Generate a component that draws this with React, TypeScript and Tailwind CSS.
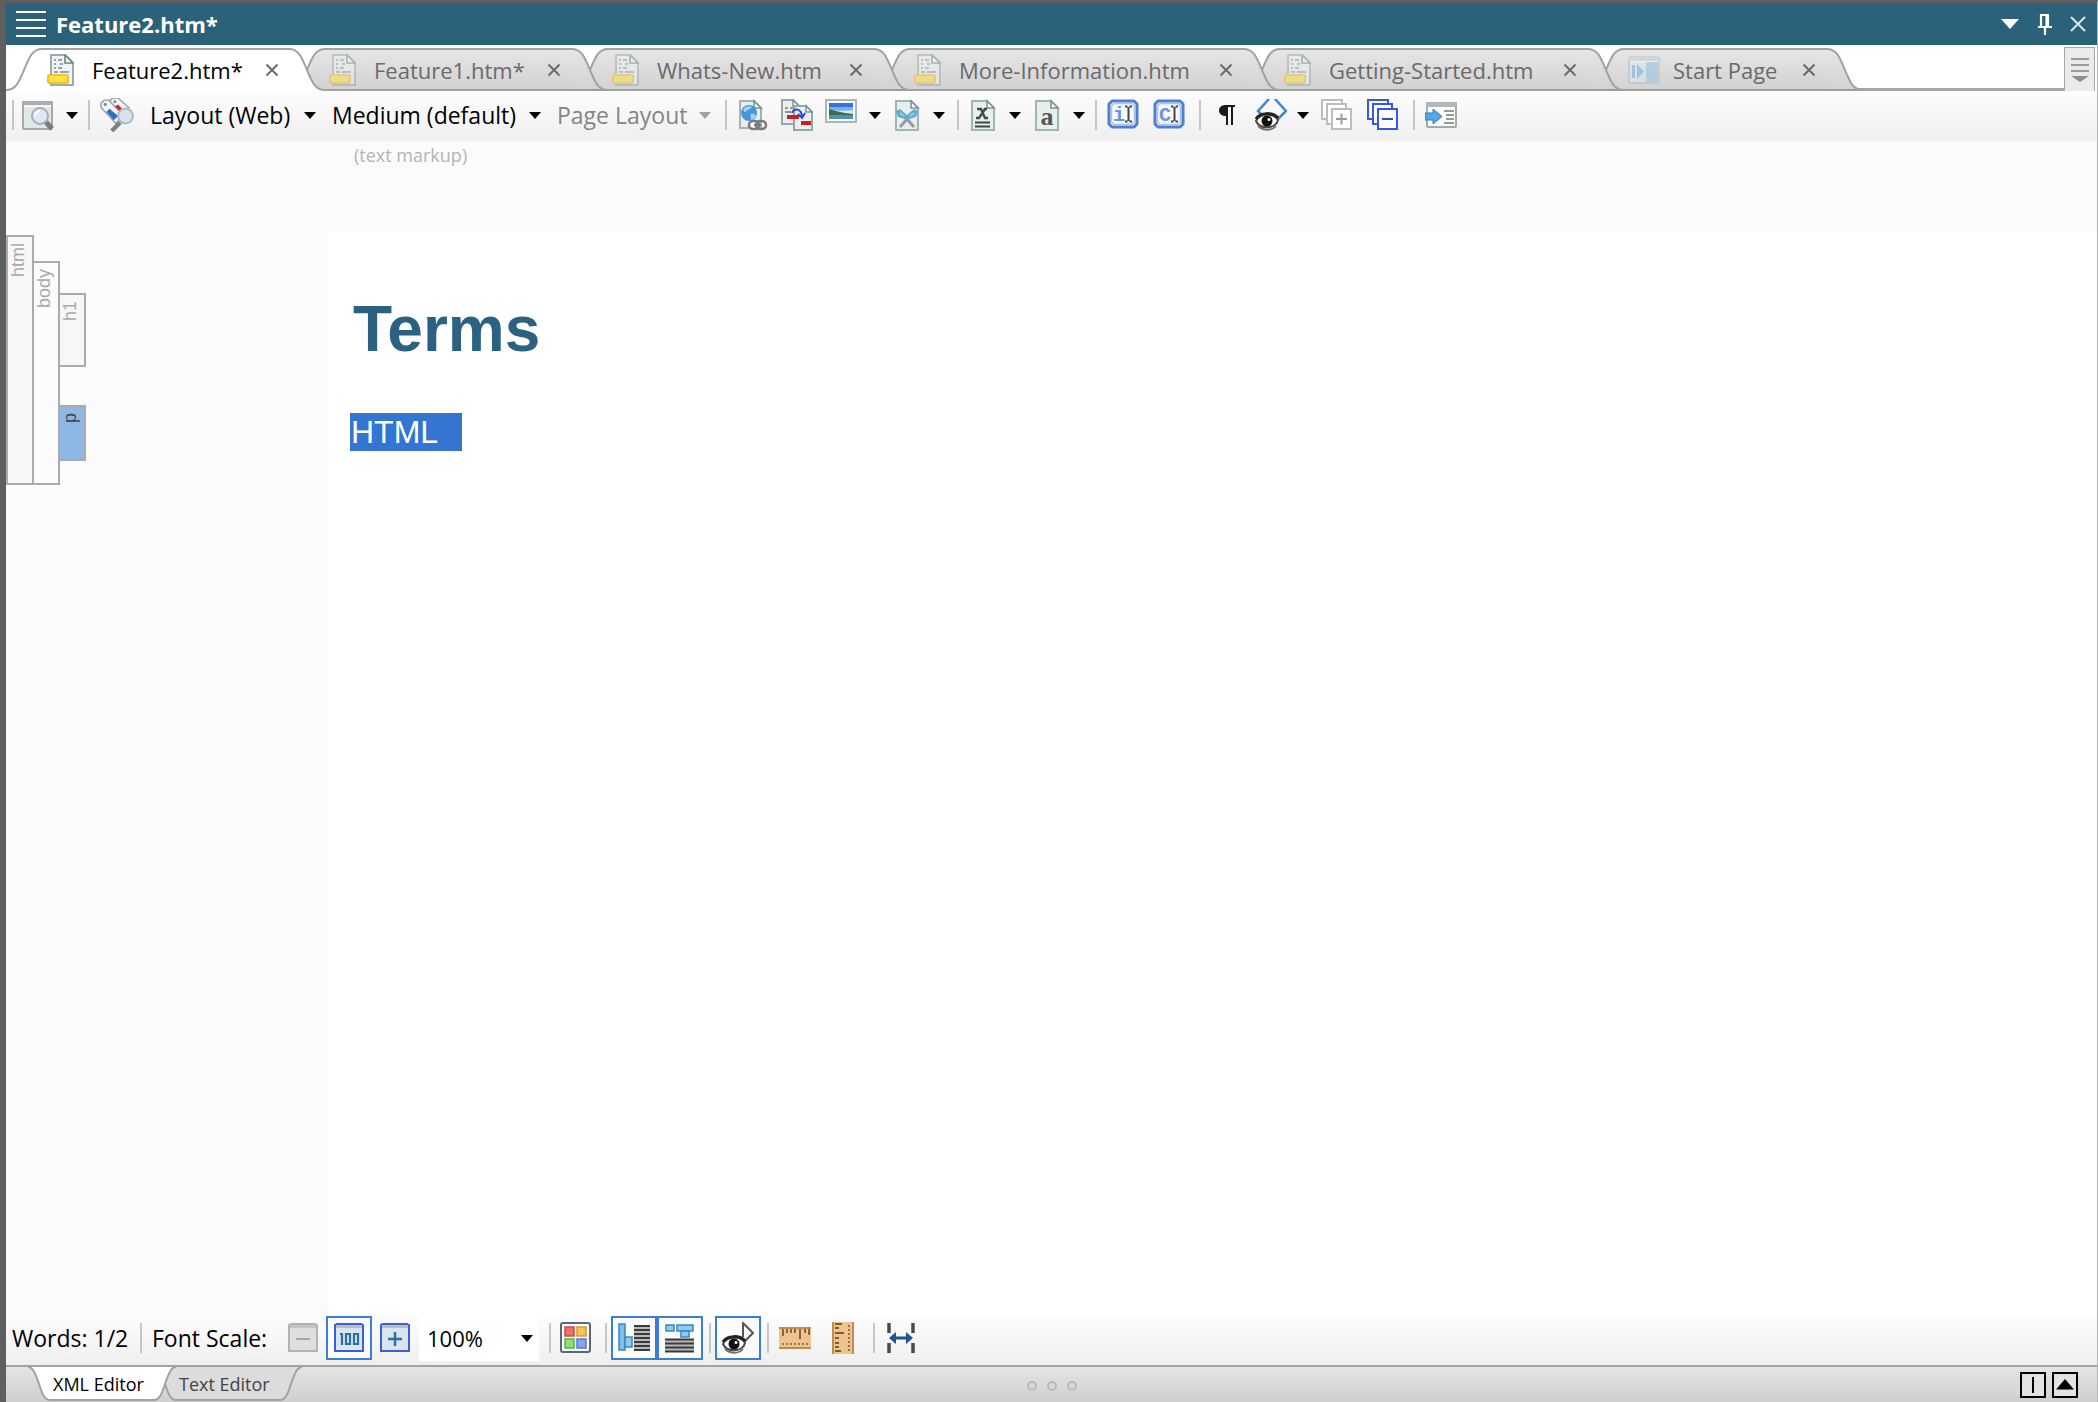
import type { ReactNode } from "react";

/* ---------- shared pieces ---------- */

function Icon({ children, size = "w-8 h-8" }: { children: ReactNode; size?: string }) {
  return (
    <svg viewBox="0 0 32 32" className={size + " block shrink-0"} aria-hidden="true">
      {children}
    </svg>
  );
}

function Tool({ label, className = "", children }: { label: string; className?: string; children: ReactNode }) {
  return (
    <button type="button" aria-label={label} title={label} className={"shrink-0 " + className}>
      {children}
    </button>
  );
}

function Caret({ color = "#000" }: { color?: string }) {
  return (
    <svg viewBox="0 0 12 7" className="block h-[7px] w-3" aria-hidden="true">
      <path d="M0 0H12L6 7Z" fill={color} />
    </svg>
  );
}

function CaretButton({ label, className = "" }: { label: string; className?: string }) {
  return (
    <button type="button" aria-label={label} aria-haspopup="menu" className={"shrink-0 " + className}>
      <Caret />
    </button>
  );
}

function Sep({ className = "" }: { className?: string }) {
  return <span role="separator" className={"block h-[30px] w-0.5 shrink-0 bg-[#c6c6c6] " + className} />;
}

function Picker({ label, value, className, disabled = false }: { label: string; value: string; className: string; disabled?: boolean }) {
  return (
    <label className={"relative flex shrink-0 items-center " + className}>
      <span className="sr-only">{label}</span>
      <select
        disabled={disabled}
        defaultValue={value}
        className="h-10 w-full appearance-none bg-transparent text-[23px] leading-10 text-black outline-none disabled:text-[#858585] disabled:opacity-100"
      >
        <option>{value}</option>
      </select>
      <span className="pointer-events-none absolute right-0">
        <Caret color={disabled ? "#a3a3a3" : "#000"} />
      </span>
    </label>
  );
}

/* ---------- icons ---------- */

const DocPage = ({ x = 4, y = 1, w = 24, h = 31 }: { x?: number; y?: number; w?: number; h?: number }) => (
  <>
    <path d={`M${x + 1} ${y + 1}H${x + w - 8}L${x + w - 1} ${y + 8}V${y + h - 1}H${x + 1}Z`} fill="#e6eeee" stroke="#a3b3b3" strokeWidth="2" />
    <path d={`M${x + w - 8} ${y + 1}V${y + 8}H${x + w - 1}Z`} fill="#fff" stroke="#7f9492" strokeWidth="1.6" />
  </>
);

function TopicIcon() {
  return (
    <svg viewBox="0 0 27 32" className="block h-8 w-[27px] shrink-0" aria-hidden="true">
      <path d="M4 1H18L26 9V31H4Z" fill="#eef3f3" stroke="#9aabab" strokeWidth="2" />
      <path d="M18 1V9H26Z" fill="#fff" stroke="#6f8482" strokeWidth="1.6" />
      <path d="M7 6h2M11 6h4M7 10h2M13 10h3M7 14h2M11 14h4M13 18h9M7 18h4" stroke="#7b8a98" strokeWidth="1.6" />
      <rect x="1" y="21" width="20" height="8" rx="1" fill="#ffe43c" stroke="#f3b221" strokeWidth="1.6" />
    </svg>
  );
}

function StartPageIcon() {
  return (
    <svg viewBox="0 0 32 28" className="block h-7 w-8 shrink-0" aria-hidden="true">
      <rect x="1" y="1" width="30" height="26" rx="2" fill="#fff" stroke="#b9bfc4" strokeWidth="2" />
      <rect x="1" y="1" width="30" height="4" fill="#c6cacd" />
      <rect x="2" y="6" width="16" height="20" fill="#d9e9f5" />
      <rect x="18" y="6" width="12" height="20" fill="#8fc0e6" />
      <path d="M4 9h3v13H4ZM9 8L16 15.500L9 23Z" fill="#6aaade" />
    </svg>
  );
}

const PreviewIcon = () => (
  <Icon>
    <rect x="1" y="3" width="29" height="27" rx="1" fill="#dfe9ea" stroke="#a4aaab" strokeWidth="2" />
    <rect x="0" y="2" width="31" height="4" fill="#a9adae" />
    <rect x="2" y="6" width="27" height="2" fill="#f4f6f6" />
    <path d="M24 23L30 30" stroke="#7b7d80" strokeWidth="5" />
    <circle cx="18" cy="17" r="8" fill="#dde7f5" stroke="#a9afb5" strokeWidth="2" />
    <path d="M13 17a5 5 0 0 1 5-5" stroke="#fff" strokeWidth="2" fill="none" />
  </Icon>
);

const StylesIcon = () => (
  <Icon size="w-[34px] h-[34px]">
    <path d="M1 5L4 2H9L23 15L15 24L1 9Z" fill="#f5f6f7" stroke="#9a9fa4" strokeWidth="1.400" />
    <path d="M9 3L12 0H17L27 9L21 15Z" fill="#f5f6f7" stroke="#9a9fa4" strokeWidth="1.400" />
    <circle cx="5" cy="6" r="1.500" fill="#888" />
    <circle cx="14" cy="3.500" r="1.400" fill="#888" />
    <path d="M6 13L9 10L17 17L13 21Z" fill="#2a70c4" />
    <path d="M14 8L17 6L22 11L19 13Z" fill="#d8262c" />
    <path d="M19 23L11 31" stroke="#7d8084" strokeWidth="4" />
    <circle cx="24" cy="17" r="7" fill="#d7e2f5" stroke="#b4bac2" strokeWidth="2" />
  </Icon>
);

const LinkIcon = () => (
  <Icon>
    <DocPage x={2} y={1} w={23} h={29} />
    <circle cx="12" cy="14" r="8" fill="#4a95d8" />
    <path d="M6 11c3-5 8-4 9-3c-2 2-3 3-5 3c-1 3-3 2-4 0ZM14 15c2-1 4 0 5 2c-1 2-3 4-5 4c0-2-1-4 0-6Z" fill="#a5d3f5" />
    <rect x="12" y="22" width="10" height="8" rx="4" fill="#fff" stroke="#7a7a7a" strokeWidth="2.500" />
    <rect x="19" y="22" width="10" height="8" rx="4" fill="none" stroke="#7a7a7a" strokeWidth="2.500" />
    <path d="M17 26h7" stroke="#7a7a7a" strokeWidth="2" />
  </Icon>
);

const CrossRefIcon = () => (
  <Icon>
    <path d="M1 1H12L18 7V25H1Z" fill="#eaf0f0" stroke="#96a8a6" strokeWidth="2" />
    <path d="M12 1V7H18Z" fill="#fff" stroke="#7f9492" strokeWidth="1.500" />
    <path d="M13 7H25L31 13V31H13Z" fill="#eaf0f0" stroke="#96a8a6" strokeWidth="2" />
    <path d="M25 7V13H31Z" fill="#fff" stroke="#7f9492" strokeWidth="1.500" />
    <path d="M4 9h3M9 9h3M4 13h6" stroke="#777" strokeWidth="1.500" />
    <rect x="6" y="16" width="12" height="4" fill="#c9211e" />
    <rect x="20" y="22" width="10" height="4" fill="#c9211e" />
    <path d="M11 14C13 9 20 9 21 17M17 15L21 19L24 14" fill="none" stroke="#2c45e0" strokeWidth="2" />
  </Icon>
);

const ImageIcon = () => (
  <Icon>
    <rect x="1" y="1" width="30" height="22" fill="#fff" stroke="#a9b6bb" strokeWidth="2" />
    <rect x="4" y="4" width="24" height="16" fill="#2f74dc" />
    <path d="M4 8h24v5H4Z" fill="#79aef0" />
    <path d="M4 11C12 12 20 12 28 11V15H4Z" fill="#cfe4fa" />
    <path d="M4 10C8 11 13 13 20 14L28 15V17H4Z" fill="#3d6b43" />
    <path d="M4 16H28V20H4Z" fill="#4c93b9" />
  </Icon>
);

const SnippetIcon = () => (
  <Icon>
    <DocPage />
    <path d="M9 28L16 20L23 28" fill="none" stroke="#9a9a9a" strokeWidth="3" />
    <path d="M5 12L9 10L16 16L23 10L27 12L25 18L18 20L16 22L14 20L7 18Z" fill="#5fb0cd" />
    <path d="M9 14L13 17M23 14L19 17" stroke="#8fd0e4" strokeWidth="2" />
  </Icon>
);

const VariableIcon = () => (
  <Icon>
    <DocPage />
    <path d="M10 10H14L18 19H21M20 10H18L12 19H9" fill="none" stroke="#4a4a4a" strokeWidth="2.400" />
    <path d="M8 23.500H23M8 27.500H23" stroke="#444" strokeWidth="2" />
  </Icon>
);

const ConceptIcon = () => (
  <Icon>
    <DocPage />
    <text x="16" y="26" textAnchor="middle" fontFamily="Liberation Serif, serif" fontWeight="bold" fontSize="26" fill="#555">a</text>
  </Icon>
);

const CursorIcon = ({ letter }: { letter: string }) => (
  <Icon>
    <path d="M5 2H27L30 5V25L27 28H5L2 25V5Z" fill="#f6f9fe" stroke="#4f7fce" strokeWidth="3" strokeLinejoin="round" />
    <path d="M7 4.500H25L27.500 7V23L25 25.500H7L4.500 23V7Z" fill="none" stroke="#a7c4ee" strokeWidth="1.500" />
    <text x="12" y="22" textAnchor="middle" fontFamily="Liberation Mono, monospace" fontWeight="bold" fontSize="20" fill="#6a93e0">{letter}</text>
    <path d="M18 7.500H20.500M22.500 7.500H25M18 22.500H20.500M22.500 22.500H25M21.500 8V22" stroke="#444" strokeWidth="2" />
  </Icon>
);

const PilcrowIcon = () => (
  <Icon>
    <path d="M24 6V8H22V26H20V8H17V26H15V17C11 17 8 15 8 11.500C8 8 11 6 15 6Z" fill="#1a1a1a" />
  </Icon>
);

const Eye = () => (
  <>
    <path d="M1 22C4 15 19 13 23 21C21 30 5 31 1 22Z" fill="#fff" stroke="#4b4a42" strokeWidth="2" />
    <path d="M1 20C5 13 18 13 23 19" fill="none" stroke="#222" strokeWidth="3" />
    <circle cx="12" cy="22" r="5.500" fill="#111" />
    <circle cx="14" cy="20.500" r="1.500" fill="#fff" />
    <path d="M3 27C8 32 17 32 21 27" fill="none" stroke="#77756a" strokeWidth="2" />
  </>
);

const MarkerEyeIcon = () => (
  <Icon>
    <path d="M14 0L3 12L10 19M20 0L31 12L22 21" fill="none" stroke="#3b87d6" strokeWidth="2.500" />
    <Eye />
  </Icon>
);

const StackIcon = ({ color, plus }: { color: string; plus?: boolean }) => (
  <Icon>
    <path d="M1 1H21V20H1Z" fill="#fff" stroke={color} strokeWidth="2" />
    <path d="M6 5H25V25H6Z" fill="#fff" stroke={color} strokeWidth="2" />
    <path d="M11 10H30V30H11Z" fill="#fff" stroke={color} strokeWidth="2" />
    <path d={plus ? "M15 20H26M20.500 14.500V25.500" : "M15 20H26"} stroke={plus ? "#9b9b9b" : "#2b4fd0"} strokeWidth="2" />
  </Icon>
);

const InsertPaneIcon = () => (
  <Icon>
    <rect x="2" y="4" width="29" height="24" rx="1" fill="#fff" stroke="#a5a9aa" strokeWidth="2" />
    <rect x="1" y="3" width="31" height="5" fill="#b4b7b8" />
    <path d="M19 12H29M21 16H29M21 20H29M19 24H29" stroke="#8aa095" strokeWidth="2" />
    <path d="M0 14H8V10L17 17.500L8 25V21H0Z" fill="#4fa9e6" stroke="#2f7fc4" strokeWidth="1" />
  </Icon>
);

const ScaleIcon = ({ kind }: { kind: "minus" | "full" | "plus" }) => {
  const off = kind === "minus";
  return (
    <Icon>
      <path d="M2 3L4 2H28L30 3V29H2Z" fill={off ? "#dedede" : "#d9e6f2"} stroke={off ? "#b3b3b3" : "#3d5fd0"} strokeWidth="2" />
      <path d="M3 4.500H29" stroke={off ? "#c4c4c4" : "#b9bec6"} strokeWidth="3" />
      {kind === "minus" && <path d="M9 17H23" stroke="#a6a6a6" strokeWidth="2" />}
      {kind === "plus" && <path d="M9 17H23M16 10V24" stroke="#2d6f9e" strokeWidth="2.500" />}
      {kind === "full" && <path d="M7 12H9V23M13 12H17V22H13ZM21 12H25V22H21Z" fill="none" stroke="#2d6f9e" strokeWidth="2.200" />}
    </Icon>
  );
};

const PaletteIcon = () => (
  <Icon>
    <rect x="2" y="1" width="29" height="29" rx="2" fill="#fff" stroke="#5d6678" strokeWidth="2" />
    <rect x="6" y="5" width="9" height="9" fill="#e8756b" stroke="#cf4a44" strokeWidth="1.500" />
    <rect x="18" y="5" width="9" height="9" fill="#f6c157" stroke="#d99a2b" strokeWidth="1.500" />
    <rect x="6" y="17" width="9" height="9" fill="#93dc78" stroke="#58b143" strokeWidth="1.500" />
    <rect x="18" y="17" width="9" height="9" fill="#86a3ef" stroke="#5777d6" strokeWidth="1.500" />
  </Icon>
);

const BlockBarsIcon = () => (
  <Icon>
    <rect x="1" y="2" width="6" height="26" fill="#7fc0ea" stroke="#3a86bd" strokeWidth="1.500" />
    <rect x="7" y="15" width="7" height="10" fill="#8fcaf0" stroke="#3a86bd" strokeWidth="1.500" />
    <rect x="16" y="3" width="16" height="25" fill="#b9b9b9" />
    <path d="M16 4H32M16 8H32M16 12H32M16 16H32M16 20H32M16 24H32M16 28H32" stroke="#3a3a3a" strokeWidth="2.200" />
  </Icon>
);

const SpanBarsIcon = () => (
  <Icon>
    <rect x="2" y="3" width="8" height="6" fill="#8fcaf0" stroke="#3a86bd" strokeWidth="1.500" />
    <rect x="13" y="3" width="16" height="6" fill="#8fcaf0" stroke="#3a86bd" strokeWidth="1.500" />
    <rect x="17" y="9" width="8" height="6" fill="#8fcaf0" stroke="#3a86bd" strokeWidth="1.500" />
    <rect x="1" y="17" width="29" height="12" fill="#b9b9b9" />
    <path d="M1 17.500H30M1 21.500H30M1 25.500H30M1 29.500H30" stroke="#3a3a3a" strokeWidth="2.200" />
  </Icon>
);

const TagEyeIcon = () => (
  <Icon>
    <path d="M21 15V1L31 11L22 20" fill="#fff" stroke="#555" strokeWidth="2" />
    <Eye />
  </Icon>
);

const RulerIcon = () => (
  <Icon>
    <rect x="0" y="5" width="32" height="22" fill="#ecc48f" />
    <path d="M0 6H32M0 26H32" stroke="#c08d50" strokeWidth="2" />
    <path d="M4 7V14M8 7V11M12 7V11M16 7V11M21 7V17M26 7V11M30 7V13" stroke="#86592c" strokeWidth="1.800" />
    <path d="M3 22H31" stroke="#86592c" strokeWidth="1.600" strokeDasharray="2 2" />
  </Icon>
);

const VRulerIcon = () => (
  <Icon>
    <rect x="5" y="0" width="22" height="32" fill="#ecc48f" />
    <path d="M6 0V32M26 0V32" stroke="#c08d50" strokeWidth="2" />
    <path d="M8 2H15M8 6H12M8 11H17M8 16H12M8 21H12M8 25H12M8 29H14" stroke="#86592c" strokeWidth="1.800" />
    <path d="M22 3V30" stroke="#86592c" strokeWidth="1.600" strokeDasharray="2 2" />
  </Icon>
);

const WidthIcon = () => (
  <Icon>
    <path d="M4 1V11M4 21V31M28 1V11M28 21V31" stroke="#4a4a4a" strokeWidth="3.500" />
    <path d="M4 16L11 10V14.500H21V10L28 16L21 22V17.500H11V22Z" fill="#1f5396" />
  </Icon>
);

/* ---------- document tabs ---------- */

const TAB_FILL = (
  <linearGradient id="tabFill" x1="0" y1="0" x2="0" y2="1">
    <stop offset="0" stopColor="#e6e6e6" />
    <stop offset="1" stopColor="#d2d2d2" />
  </linearGradient>
);

function TabEdge({ side, active }: { side: "left" | "right"; active: boolean }) {
  return (
    <svg viewBox="0 0 36 43" className={side === "left" ? "block h-[43px] w-9 shrink-0 -scale-x-100" : "block h-[43px] w-9 shrink-0"} aria-hidden="true">
      <defs>{TAB_FILL}</defs>
      <path d="M0 1C10 1 13 10 18 22S26 42 36 42V43H0Z" fill={active ? "#fff" : "url(#tabFill)"} />
      {!active && <path d="M0 42H36" stroke="#9c9c9c" strokeWidth="2" />}
      <path d="M0 1C10 1 13 10 18 22S26 42 36 42" fill="none" stroke="#a2a2a2" strokeWidth="2" />
    </svg>
  );
}

const TABS = [
  { name: "Feature2.htm*", width: "w-[150px]", layer: "z-60" },
  { name: "Feature1.htm*", width: "w-[150px]", layer: "z-50 -ml-9" },
  { name: "Whats-New.htm", width: "w-[169px]", layer: "z-40 -ml-9" },
  { name: "More-Information.htm", width: "w-[237px]", layer: "z-30 -ml-9" },
  { name: "Getting-Started.htm", width: "w-[211px]", layer: "z-20 -ml-9" },
  { name: "Start Page", width: "w-[106px]", layer: "z-10 -ml-9" },
];

function DocTab({ name, width, layer, active }: { name: string; width: string; layer: string; active: boolean }) {
  return (
    <div className={"relative flex shrink-0 " + layer}>
      <TabEdge side="left" active={active} />
      <div
        className={
          "flex h-[43px] items-center border-t-2 border-[#a2a2a2] " +
          (active ? "bg-white pr-2.5 pb-0.5 pl-[5px]" : "border-b-2 bg-linear-to-b from-[#e6e6e6] to-[#d2d2d2] pr-[11px] pl-1")
        }
      >
        <button type="button" role="tab" aria-selected={active} className="flex items-center text-left">
          <span className={"flex w-[45px] " + (active ? "" : "opacity-50")}>{name === "Start Page" ? <StartPageIcon /> : <TopicIcon />}</span>
          <span className={"text-[22px] leading-8 whitespace-nowrap " + width + (active ? " text-black" : " text-[#6a6a6a]")}>{name}</span>
        </button>
        <button type="button" aria-label={"Close " + name} className="ml-[23px]">
          <svg viewBox="0 0 14 14" className="block h-3.5 w-3.5" aria-hidden="true">
            <path d="M1.500 1.500L12.500 12.500M12.500 1.500L1.500 12.500" stroke="#6b6b6b" strokeWidth="2" />
          </svg>
        </button>
      </div>
      <TabEdge side="right" active={active} />
    </div>
  );
}

/* ---------- editor tabs at the foot ---------- */

function FootEdge({ side, active }: { side: "left" | "right"; active: boolean }) {
  return (
    <svg viewBox="0 0 22 34" className={side === "left" ? "block h-[34px] w-[22px] shrink-0 -scale-x-100" : "block h-[34px] w-[22px] shrink-0"} aria-hidden="true">
      <path d="M0 33C7 33 9 22 12 14S17 0 22 0H0Z" fill={active ? "#fff" : "#dcdcdc"} />
      <path d="M0 33C7 33 9 22 12 14S17 0 22 0" fill="none" stroke="#a2a2a2" strokeWidth="2" />
    </svg>
  );
}

function FootTab({ name, active, layer }: { name: string; active: boolean; layer: string }) {
  return (
    <button type="button" role="tab" aria-selected={active} className={"relative flex shrink-0 " + layer}>
      <FootEdge side="left" active={active} />
      <span className={"h-[34px] w-[104px] border-b-2 border-[#a2a2a2] pl-[3px] text-left text-[18px] leading-[34px] whitespace-nowrap " + (active ? "bg-white text-black" : "bg-[#dcdcdc] text-[#444]")}>
        {name}
      </span>
      <FootEdge side="right" active={active} />
    </button>
  );
}

/* ---------- structure bars ---------- */

function BarLabel({ children, className = "" }: { children: string; className?: string }) {
  return (
    <span className={"mr-1 block w-5 rotate-180 pb-1.5 text-right font-['Liberation_Sans',Arial,sans-serif] text-[18px] leading-5 [writing-mode:vertical-rl] " + className}>
      {children}
    </span>
  );
}

/* ---------- page ---------- */

export default function App() {
  return (
    <div className="flex h-screen flex-col overflow-hidden border-t-3 border-r border-l-6 border-t-[#5f5f5f] border-r-[#b5b5b5] border-l-[#5f5f5f] bg-[#fbfbfb] font-['Open_Sans','Noto_Sans',sans-serif]">
      <header className="flex h-[42px] shrink-0 items-center bg-[#2b6279] pr-[11px] pl-2.5 text-white">
        <button type="button" aria-label="Menu">
          <svg viewBox="0 0 30 28" className="block h-7 w-[30px]" aria-hidden="true">
            <path d="M0 2H30M0 10H30M0 18H30M0 26H30" stroke="#fff" strokeWidth="2" />
          </svg>
        </button>
        <h1 className="ml-2.5 text-[22px] leading-8 font-bold">Feature2.htm*</h1>
        <div className="ml-auto flex items-center">
          <button type="button" aria-label="Window list">
            <svg viewBox="0 0 18 10" className="block h-2.5 w-[18px]" aria-hidden="true">
              <path d="M0 0H18L9 10Z" fill="#fff" />
            </svg>
          </button>
          <button type="button" aria-label="Pin" className="ml-[18px]">
            <svg viewBox="0 0 16 22" className="block h-[22px] w-4" aria-hidden="true">
              <path d="M4 13V2H11V13M9.500 2V13M1 14H15M8 14V22" fill="none" stroke="#fff" strokeWidth="2.200" />
            </svg>
          </button>
          <button type="button" aria-label="Close" className="ml-[17px]">
            <svg viewBox="0 0 16 16" className="block h-4 w-4" aria-hidden="true">
              <path d="M1 1L15 15M15 1L1 15" stroke="#d9e6ec" strokeWidth="2" />
            </svg>
          </button>
        </div>
      </header>

      <div role="tablist" aria-label="Documents" className="flex shrink-0 items-end bg-white pt-0.5 pr-0.5">
        {TABS.map((t, i) => (
          <DocTab key={t.name} {...t} active={i === 0} />
        ))}
        <div className="-ml-1 h-[43px] flex-1 border-b-3 border-[#a2a5a9]" />
        <button type="button" aria-label="All documents" className="flex h-11 w-[31px] justify-center border-t border-r border-l border-[#a8a8a8] bg-[#ebebeb] pt-2.5">
          <svg viewBox="0 0 18 25" className="block h-[25px] w-[18px]" aria-hidden="true">
            <path d="M0 1H18M0 7H18M0 13H18" stroke="#9a9a9a" strokeWidth="2" />
            <path d="M0 18H18L9 24Z" fill="#8f8f8f" />
          </svg>
        </button>
      </div>

      <div role="toolbar" aria-label="Editing" className="flex h-[50px] shrink-0 items-center bg-linear-to-b from-[#fdfdfd] to-[#efefef] pb-0.5 pl-1.5">
        <Sep />
        <Tool label="Preview" className="ml-2"><PreviewIcon /></Tool>
        <CaretButton label="Preview options" className="ml-3" />
        <Sep className="ml-2.5" />
        <Tool label="Styles" className="ml-2.5"><StylesIcon /></Tool>
        <Picker label="Layout" value="Layout (Web)" className="ml-4 w-[166px]" />
        <Picker label="Medium" value="Medium (default)" className="ml-4 w-[209px]" />
        <Picker label="Page layout" value="Page Layout" className="ml-4 w-[154px]" disabled />
        <Sep className="ml-3.5" />
        <Tool label="Insert link" className="ml-2.5"><LinkIcon /></Tool>
        <Tool label="Insert cross-reference" className="ml-3"><CrossRefIcon /></Tool>
        <Tool label="Insert image" className="ml-3"><ImageIcon /></Tool>
        <CaretButton label="Image options" className="ml-3" />
        <Tool label="Insert snippet" className="ml-2.5"><SnippetIcon /></Tool>
        <CaretButton label="Snippet options" className="ml-2.5" />
        <Sep className="ml-3" />
        <Tool label="Insert variable" className="ml-2"><VariableIcon /></Tool>
        <CaretButton label="Variable options" className="ml-2.5" />
        <Tool label="Insert concept" className="ml-2.5"><ConceptIcon /></Tool>
        <CaretButton label="Concept options" className="ml-2.5" />
        <Sep className="ml-2.5" />
        <Tool label="Insert index marker" className="ml-2.5"><CursorIcon letter="i" /></Tool>
        <Tool label="Insert concept marker" className="ml-3.5"><CursorIcon letter="C" /></Tool>
        <Sep className="ml-3.5" />
        <Tool label="Paragraph marks" className="ml-2.5"><PilcrowIcon /></Tool>
        <Tool label="Show tags" className="ml-3"><MarkerEyeIcon /></Tool>
        <CaretButton label="Show tags options" className="ml-2.5" />
        <Tool label="Expand all" className="ml-3"><StackIcon color="#bdbdbd" plus /></Tool>
        <Tool label="Collapse all" className="ml-3.5"><StackIcon color="#3557ee" /></Tool>
        <Sep className="ml-3.5" />
        <Tool label="Attributes pane" className="ml-2.5"><InsertPaneIcon /></Tool>
      </div>

      <main className="flex min-h-0 flex-1 flex-col">
        <p className="h-[91px] shrink-0 pt-0.5 pl-[348px] text-[18px] leading-6 text-[#b4b4b4]">(text markup)</p>
        <div className="flex flex-1">
          <nav aria-label="Document structure" className="flex w-[322px] shrink-0 items-start pt-[3px] text-[#a9a9a9]">
            <div className="flex h-[250px] border-2 border-[#ababab] bg-[#f7f7f7]">
              <BarLabel>html</BarLabel>
            </div>
            <div className="mt-[26px] flex h-56 border-t-2 border-r-2 border-b-2 border-[#ababab] bg-[#fbfbfb]">
              <BarLabel>body</BarLabel>
            </div>
            <div className="mt-[58px] flex flex-col gap-[38px]">
              <div className="h-[74px] border-t-2 border-r-2 border-b-2 border-[#ababab] bg-[#f7f7f7]">
                <BarLabel>h1</BarLabel>
              </div>
              <div className="h-14 border-t-2 border-r-2 border-b-2 border-[#ababab] bg-[#8db8e6]">
                <BarLabel className="text-[#444]">p</BarLabel>
              </div>
            </div>
          </nav>
          <article className="flex-1 bg-white pt-[65px] pl-[22px] font-['Liberation_Sans',Arial,sans-serif]">
            <h2 className="pl-[3px] text-[64px] leading-none font-bold text-[#2b6282]">Terms</h2>
            <p className="mt-[52px] w-28 bg-[#3375d0] pl-px text-[32px] leading-[38px] text-white">HTML</p>
          </article>
        </div>
      </main>

      <div role="toolbar" aria-label="View" className="flex h-[50px] shrink-0 items-center bg-linear-to-b from-[#fdfdfd] to-[#efefef] pb-1 pl-1.5 text-[23px] leading-8 text-black">
        <span className="w-32 whitespace-nowrap">Words: 1/2</span>
        <Sep />
        <span className="ml-2.5 w-[135px] whitespace-nowrap">Font Scale:</span>
        <Tool label="Decrease font scale"><ScaleIcon kind="minus" /></Tool>
        <Tool label="Reset font scale" className="ml-[7px] border-2 border-[#3a7fd5] bg-[#fafcff] px-[5px] py-1"><ScaleIcon kind="full" /></Tool>
        <Tool label="Increase font scale" className="ml-[7px]"><ScaleIcon kind="plus" /></Tool>
        <label className="relative ml-2 flex h-[46px] w-[120px] items-center bg-white">
          <span className="sr-only">Zoom</span>
          <select defaultValue="100%" className="h-10 w-full appearance-none bg-transparent pl-2 text-[22px] leading-10 outline-none">
            <option>100%</option>
          </select>
          <span className="pointer-events-none absolute right-1.5">
            <Caret />
          </span>
        </label>
        <Sep className="ml-2.5" />
        <Tool label="Palette" className="ml-2"><PaletteIcon /></Tool>
        <Sep className="ml-3.5" />
        <Tool label="Block bars" className="ml-1 border-2 border-[#3a7fd5] bg-[#fafcff] px-[5px] py-1"><BlockBarsIcon /></Tool>
        <Tool label="Span bars" className="border-2 border-[#3a7fd5] bg-[#fafcff] px-[5px] py-1"><SpanBarsIcon /></Tool>
        <Sep className="ml-1.5" />
        <Tool label="Show markers" className="ml-1 border-2 border-[#3a7fd5] bg-[#fafcff] px-[5px] py-1"><TagEyeIcon /></Tool>
        <Sep className="ml-1.5" />
        <Tool label="Horizontal ruler" className="ml-2.5"><RulerIcon /></Tool>
        <Tool label="Vertical ruler" className="ml-4"><VRulerIcon /></Tool>
        <Sep className="ml-3.5" />
        <Tool label="Fit width" className="ml-2.5"><WidthIcon /></Tool>
      </div>

      <footer className="relative flex h-[37px] shrink-0 items-start justify-between border-t-2 border-[#a2a2a2] bg-linear-to-b from-[#e4e4e4] to-[#cfcfcf] pr-[19px] pl-[22px]">
        <div role="tablist" aria-label="Editors" className="flex">
          <FootTab name="XML Editor" active layer="z-20" />
          <FootTab name="Text Editor" active={false} layer="-ml-[22px] z-10" />
        </div>
        <div className="absolute inset-x-0 top-3.5 flex justify-center gap-2.5">
          <span className="h-2.5 w-2.5 rounded-full border-2 border-[#b9b9b9]" />
          <span className="h-2.5 w-2.5 rounded-full border-2 border-[#b9b9b9]" />
          <span className="h-2.5 w-2.5 rounded-full border-2 border-[#b9b9b9]" />
        </div>
        <div className="relative mt-[5px] flex gap-1.5">
          <button type="button" aria-label="Split vertically">
            <svg viewBox="0 0 26 26" className="block h-[26px] w-[26px]" aria-hidden="true">
              <rect x="1" y="1" width="24" height="24" fill="#e3e3e3" stroke="#000" strokeWidth="2" />
              <path d="M13 5V21" stroke="#000" strokeWidth="2" />
            </svg>
          </button>
          <button type="button" aria-label="Expand pane">
            <svg viewBox="0 0 26 26" className="block h-[26px] w-[26px]" aria-hidden="true">
              <rect x="1" y="1" width="24" height="24" fill="#e3e3e3" stroke="#000" strokeWidth="2" />
              <path d="M4 17.500L13 7L22 17.500Z" fill="#000" />
            </svg>
          </button>
        </div>
      </footer>
    </div>
  );
}
